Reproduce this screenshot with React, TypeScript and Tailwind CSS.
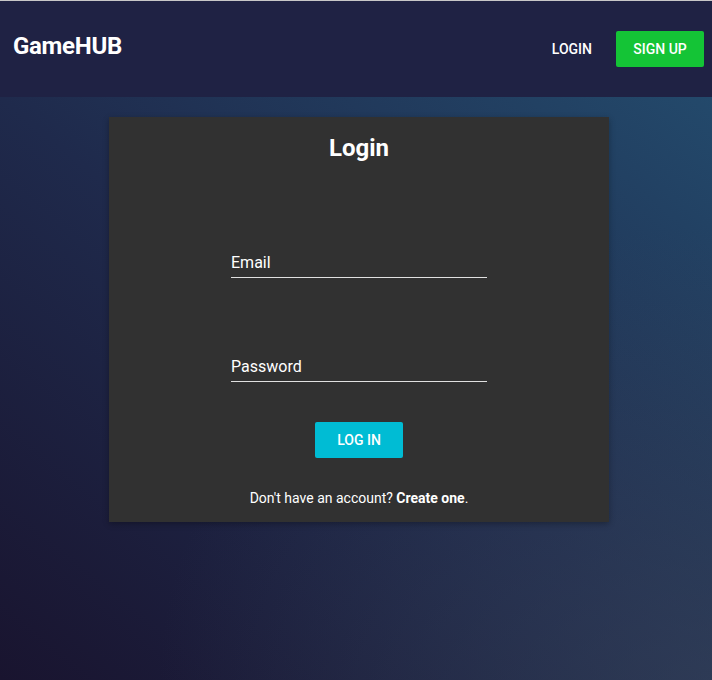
import React from 'react';

const font = { fontFamily: 'Roboto, "Liberation Sans", sans-serif' };

const Field: React.FC<{ label: string }> = ({ label }) => (
  <div className="w-[256px] h-[30px] border-b border-[#e0e0e0] flex items-end pb-[4px]">
    <span className="text-[16px] text-white leading-[20px]">{label}</span>
  </div>
);

export default function App() {
  return (
    <div style={font} className="w-[712px] h-[680px] flex flex-col overflow-hidden">
      <header className="h-[97px] shrink-0 bg-[#1f2244] border-t border-[#c8c8c8] flex items-center justify-between pl-[13px] pr-[8px]">
        <h1 className="text-[24px] font-bold text-white -mt-[6px] tracking-[-0.3px]">GameHUB</h1>
        <nav className="flex items-center gap-[24px]">
          <a className="text-[14px] font-medium text-white">LOGIN</a>
          <button className="h-[36px] w-[88px] rounded-[2px] bg-[#14c436] text-[14px] font-medium text-white">SIGN UP</button>
        </nav>
      </header>

      <main className="flex-1 flex flex-col items-center pt-[20px] pl-[6px] bg-[radial-gradient(ellipse_at_100%_100%,rgba(60,75,95,0.5),transparent_55%),linear-gradient(to_top_right,#19142f,#1f2a4c_50%,#23496b)]">
        <section className="w-[500px] h-[405px] bg-[#313131] shadow-[0_2px_6px_rgba(0,0,0,0.3)] flex flex-col items-center">
          <h2 className="mt-[15px] text-[24px] font-bold text-white leading-[32px]">Login</h2>
          <form className="flex flex-col items-center">
            <div className="mt-[84px]">
              <Field label="Email" />
            </div>
            <div className="mt-[74px]">
              <Field label="Password" />
            </div>
            <button
              type="button"
              className="mt-[40px] h-[36px] w-[88px] rounded-[2px] bg-[#00bcd4] text-[14px] font-medium text-white"
            >
              LOG IN
            </button>
          </form>
          <p className="mt-[30px] text-[14px] text-white">
            Don't have an account? <a className="font-bold">Create one</a>.
          </p>
        </section>
      </main>
    </div>
  );
}
